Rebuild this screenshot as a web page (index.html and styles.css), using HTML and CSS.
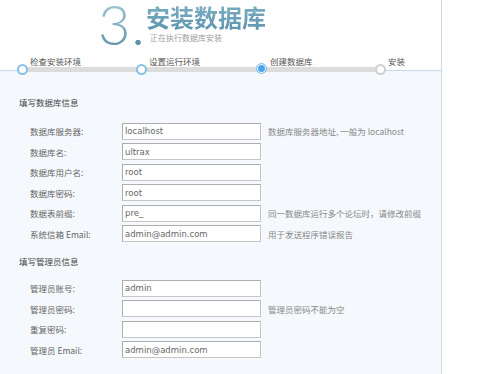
FILE: index.html
```html
<!DOCTYPE html>
<html lang="zh-CN">
<head>
    <meta charset="UTF-8">
    <title>安装数据库</title>
    <link rel="stylesheet" href="styles.css">
</head>
<body>
    <div class="main">
        <div class="header">
            <div class="step-num">3<span class="dot">.</span></div>
            <div class="step-title">
                <h1>安装数据库</h1>
                <p>正在执行数据库安装</p>
            </div>
        </div>

        <div class="steps">
            <div class="step done"><i></i><span>检查安装环境</span></div>
            <div class="step done"><i></i><span>设置运行环境</span></div>
            <div class="step current"><i></i><span>创建数据库</span></div>
            <div class="step"><i></i><span>安装</span></div>
        </div>

        <div class="content">
            <div class="section-title">填写数据库信息</div>
            <div class="row">
                <label>数据库服务器:</label>
                <input type="text" value="localhost">
                <span class="tip">数据库服务器地址, 一般为 localhost</span>
            </div>
            <div class="row">
                <label>数据库名:</label>
                <input type="text" value="ultrax">
            </div>
            <div class="row">
                <label>数据库用户名:</label>
                <input type="text" value="root">
            </div>
            <div class="row">
                <label>数据库密码:</label>
                <input type="text" value="root">
            </div>
            <div class="row">
                <label>数据表前缀:</label>
                <input type="text" value="pre_">
                <span class="tip">同一数据库运行多个论坛时，请修改前缀</span>
            </div>
            <div class="row">
                <label>系统信箱 Email:</label>
                <input type="text" value="admin@admin.com">
                <span class="tip">用于发送程序错误报告</span>
            </div>

            <div class="section-title second">填写管理员信息</div>
            <div class="row">
                <label>管理员账号:</label>
                <input type="text" value="admin">
            </div>
            <div class="row">
                <label>管理员密码:</label>
                <input type="password" value="">
                <span class="tip">管理员密码不能为空</span>
            </div>
            <div class="row">
                <label>重复密码:</label>
                <input type="password" value="">
            </div>
            <div class="row">
                <label>管理员 Email:</label>
                <input type="text" value="admin@admin.com">
            </div>
        </div>
    </div>
</body>
</html>
```

FILE: styles.css
```css
body {
    margin: 0;
    background-color: #fff;
    font-family: "Liberation Sans", "Noto Sans CJK SC", sans-serif;
    color: #555;
}

.main {
    width: 441px;
    border-right: 1px solid #c9dbe7;
    min-height: 374px;
    display: flex;
    flex-direction: column;
}

/* header */
.header {
    height: 52px;
    display: flex;
    padding-left: 98px;
}

.step-num {
    font-family: "Lato", "Liberation Sans", sans-serif;
    font-weight: 300;
    font-size: 56px;
    line-height: 48px;
    background: linear-gradient(#a3c6d4, #5b90a7);
    -webkit-background-clip: text;
    background-clip: text;
    color: transparent;
    width: 49px;
}

.step-num .dot {
    color: #5f93a9;
    margin-left: 1px;
}

.step-title {
    margin-left: -1px;
}

.step-title h1 {
    margin: 0;
    font-family: "Noto Sans CJK SC", sans-serif;
    font-size: 24px;
    line-height: 34px;
    font-weight: bold;
    background: linear-gradient(#7fb1c6, #5a93ab);
    -webkit-background-clip: text;
    background-clip: text;
    color: transparent;
}

.step-title p {
    margin: 0 0 0 4px;
    font-size: 8px;
    line-height: 8px;
    color: #a0a0a0;
    font-family: "Noto Sans CJK SC", sans-serif;
}

/* steps */
.steps {
    position: relative;
    height: 18px;
    display: grid;
    grid-template-columns: 119px 121px 118px auto;
    padding-left: 17px;
}

.steps::before {
    content: "";
    position: absolute;
    left: 22px;
    width: 358px;
    top: 15px;
    height: 5px;
    background: #dcdcdc;
}

.step {
    position: relative;
    display: flex;
    align-items: flex-start;
}

.step i {
    position: absolute;
    left: 0;
    top: 12px;
    width: 7px;
    height: 7px;
    border: 2px solid #86c0e8;
    border-radius: 50%;
    background: #fff;
    z-index: 1;
}

.step.current i {
    left: -1px;
    top: 11px;
    width: 9px;
    height: 9px;
    border: 1px solid #8cc4ea;
    background: #4aa5ea;
    box-shadow: inset 0 0 0 1px #fff;
}

.step:last-child i {
    border-color: #cfcfcf;
}

.step span {
    margin-left: 13px;
    margin-top: 4px;
    font-family: "Noto Sans CJK SC", sans-serif;
    font-size: 8.5px;
    line-height: 10px;
    color: #555;
}

/* form */
.content {
    flex: 1;
    background-color: #f5f9fd;
    border-top: 1px solid #c3dbeb;
    padding: 25px 0 0 19px;
}

.section-title {
    font-family: "Noto Sans CJK SC", sans-serif;
    font-size: 8.5px;
    line-height: 12px;
    color: #444;
    margin-bottom: 13px;
}

.section-title.second {
    margin-top: 11px;
    margin-bottom: 11px;
}

.row {
    display: flex;
    align-items: center;
    height: 20.5px;
    padding-left: 11px;
}

.row label {
    width: 92px;
    font-family: "Noto Sans CJK SC", sans-serif;
    font-size: 8.5px;
    color: #666;
}

.row input {
    box-sizing: border-box;
    width: 139px;
    height: 17px;
    margin: 0;
    padding: 0 2px;
    border: 1px solid #c6c6c6;
    border-top-color: #adadad;
    border-left-color: #adadad;
    background: #fff;
    font-family: "DejaVu Sans", "Liberation Sans", sans-serif;
    font-size: 8.5px;
    color: #666;
    outline: none;
}

.row .tip {
    margin-left: 7px;
    font-family: "Noto Sans CJK SC", sans-serif;
    font-size: 8.5px;
    color: #888;
}
```
